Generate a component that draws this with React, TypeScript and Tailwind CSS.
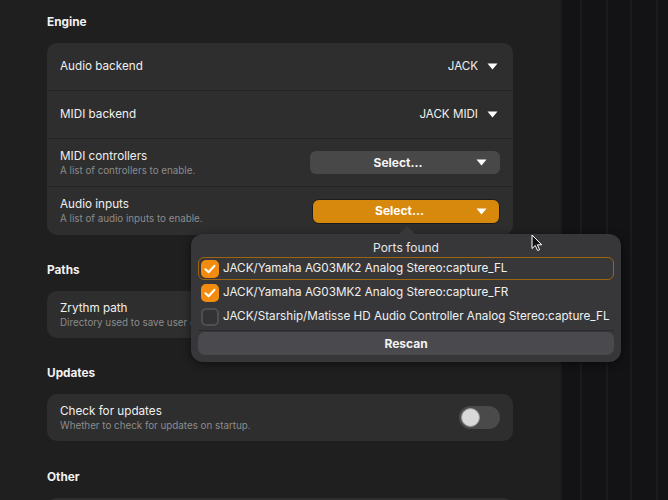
import React from "react";

const font = { fontFamily: "Inter, 'Noto Sans', sans-serif" };

function Caret({ className = "" }: { className?: string }) {
  return (
    <svg width="11" height="7" viewBox="0 0 11 7" className={className}>
      <path d="M0.5 0.5 L10.5 0.5 L5.5 6.5 Z" fill="#ffffff" />
    </svg>
  );
}

function Check() {
  return (
    <svg width="12" height="10" viewBox="0 0 12 10">
      <path d="M1.5 5.2 L4.6 8.2 L10.5 1.8" fill="none" stroke="#ffffff" strokeWidth="2" strokeLinecap="round" strokeLinejoin="round" />
    </svg>
  );
}

function Heading({ children }: { children: React.ReactNode }) {
  return <div className="h-[18px] leading-[18px] text-[11.8px] font-bold text-[#f2f2f2] mb-[12px]">{children}</div>;
}

function TwoLine({ title, sub }: { title: string; sub: string }) {
  return (
    <div className="flex flex-col whitespace-nowrap">
      <div className="text-[11.7px] leading-[16px] text-[#f0f0f0]">{title}</div>
      <div className="text-[9.8px] leading-[14px] text-[#8c8c8c]">{sub}</div>
    </div>
  );
}

export default function App() {
  return (
    <div className="relative flex w-[668px] h-[500px] overflow-hidden" style={font}>
      <div className="w-[560px] h-full bg-[#1f1f1f] pl-[47px] pr-[47px] pt-[13px]">
        <Heading>Engine</Heading>
        <div className="rounded-[10px] bg-[#2e2e2e] overflow-hidden">
          <div className="h-[48px] border-b border-[#232323] flex items-center justify-between pl-[13px] pr-[15px]">
            <div className="text-[11.7px] text-[#f0f0f0]">Audio backend</div>
            <div className="flex items-center gap-[9px]">
              <span className="text-[11.6px] text-[#f0f0f0]">JACK</span>
              <Caret />
            </div>
          </div>
          <div className="h-[48px] border-b border-[#232323] flex items-center justify-between pl-[13px] pr-[15px]">
            <div className="text-[11.7px] text-[#f0f0f0]">MIDI backend</div>
            <div className="flex items-center gap-[9px]">
              <span className="text-[11.6px] text-[#f0f0f0]">JACK MIDI</span>
              <Caret />
            </div>
          </div>
          <div className="h-[48px] border-b border-[#232323] flex items-center justify-between pl-[13px] pr-[13px]">
            <TwoLine title="MIDI controllers" sub="A list of controllers to enable." />
            <div className="w-[190px] h-[23px] rounded-[6px] bg-[#484848] flex items-center pl-[10px] pr-[13px]">
              <span className="flex-1 text-center text-[12px] font-bold text-[#f5f5f5]">Select...</span>
              <Caret />
            </div>
          </div>
          <div className="h-[48px] flex items-center justify-between pl-[13px] pr-[13px]">
            <TwoLine title="Audio inputs" sub="A list of audio inputs to enable." />
            <div className="w-[188px] h-[25px] rounded-[7px] bg-[#d6890d] border border-[#1b1b1b] flex items-center pl-[10px] pr-[12px]">
              <span className="flex-1 text-center text-[12px] font-bold text-[#ffffff]">Select...</span>
              <Caret />
            </div>
          </div>
        </div>

        <div className="mt-[26px]">
          <Heading>Paths</Heading>
          <div className="h-[47px] rounded-[10px] bg-[#2e2e2e] flex items-center pl-[13px]">
            <TwoLine title="Zrythm path" sub="Directory used to save user data." />
          </div>
        </div>

        <div className="mt-[26px]">
          <Heading>Updates</Heading>
          <div className="h-[47px] rounded-[10px] bg-[#2e2e2e] flex items-center justify-between pl-[13px] pr-[13px]">
            <TwoLine title="Check for updates" sub="Whether to check for updates on startup." />
            <div className="w-[41px] h-[23px] rounded-full bg-[#4a4a4a] flex items-center px-[2px]">
              <div className="w-[19px] h-[19px] rounded-full bg-[#d9d9d9] border border-[#9a9a9a]" />
            </div>
          </div>
        </div>

        <div className="mt-[27px]">
          <Heading>Other</Heading>
          <div className="h-[47px] rounded-[10px] bg-[#2e2e2e]" />
        </div>
      </div>

      <div className="flex-1 h-full bg-[#131315] flex">
        <div className="w-[20px] h-full border-l-2 border-[#1a1a1d]" />
        <div className="w-[26px] h-full border-l-2 border-[#1a1a1d]" />
        <div className="w-[24px] h-full border-l-2 border-[#1a1a1d]" />
        <div className="w-[26px] h-full border-l-2 border-[#1a1a1d]" />
        <div className="flex-1 h-full border-l-2 border-[#1a1a1d]" />
      </div>

      {/* Popover */}
      <div className="absolute left-[191px] top-[234px] w-[430px] h-[128px] rounded-[12px] bg-[#37373a] shadow-[0_2px_8px_rgba(0,0,0,0.5)] px-[7px] pt-[6px] whitespace-nowrap">
        <div className="absolute left-[207px] top-[-8px] w-0 h-0 border-l-[9px] border-r-[9px] border-b-[9px] border-l-transparent border-r-transparent border-b-[#37373a]" />
        <div className="text-center text-[12px] leading-[16px] text-[#e6e6e6]">Ports found</div>
        <div className="mt-[1px] h-[23px] rounded-[6px] border border-[#9c6510] flex items-center gap-[4px] pl-[2px]">
          <div className="w-[18px] h-[18px] rounded-[5px] bg-[#f28c0e] flex items-center justify-center"><Check /></div>
          <span className="text-[11.7px] text-[#f0f0f0]">JACK/Yamaha AG03MK2 Analog Stereo:capture_FL</span>
        </div>
        <div className="mt-[2px] h-[22px] flex items-center gap-[4px] pl-[3px]">
          <div className="w-[18px] h-[18px] rounded-[5px] bg-[#f28c0e] flex items-center justify-center"><Check /></div>
          <span className="text-[11.7px] text-[#f0f0f0]">JACK/Yamaha AG03MK2 Analog Stereo:capture_FR</span>
        </div>
        <div className="mt-[2px] h-[22px] flex items-center gap-[4px] pl-[3px]">
          <div className="w-[18px] h-[18px] rounded-[5px] border-2 border-[#4f4f53] bg-[#333336]" />
          <span className="text-[11.7px] text-[#f0f0f0]">JACK/Starship/Matisse HD Audio Controller Analog Stereo:capture_FL</span>
        </div>
        <div className="mt-[2px] border-t border-[#2a2a2c]" />
        <div className="mt-[1px] h-[23px] rounded-[7px] bg-[#4a4a4e] flex items-center justify-center text-[12px] font-bold text-[#f2f2f2]">Rescan</div>
      </div>

      {/* Cursor */}
      <svg className="absolute left-[531px] top-[234px]" width="12" height="18" viewBox="0 0 12 18">
        <path d="M1 1 L1 14.5 L4.3 11.5 L6.6 16.6 L8.6 15.7 L6.4 10.8 L10.8 10.8 Z" fill="#111" stroke="#fff" strokeWidth="1" strokeLinejoin="round" />
      </svg>
    </div>
  );
}
